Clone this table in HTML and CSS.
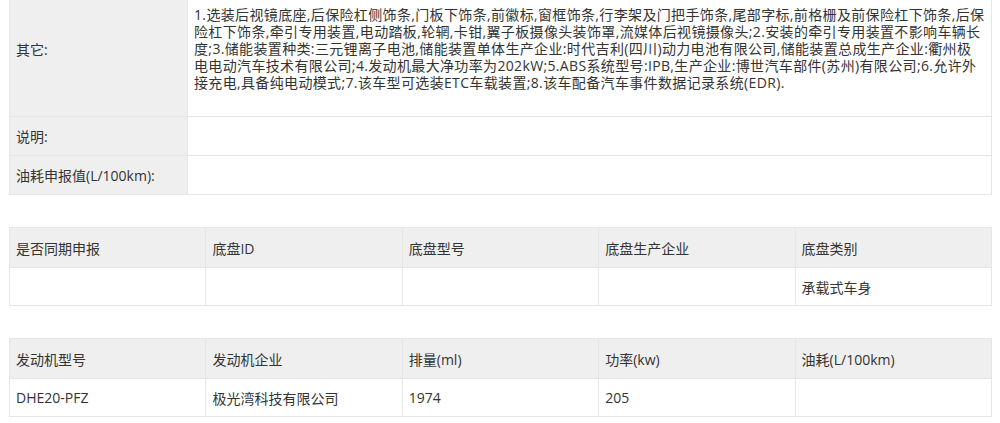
FILE: index.html
```html
<!DOCTYPE html>
<html lang="zh-CN">
<head>
<meta charset="utf-8">
<title>车型参数</title>
<link rel="stylesheet" href="styles.css">
</head>
<body>
<table class="info">
  <tr class="row-tall">
    <th class="label">其它:</th>
    <td class="value">1.选装后视镜底座,后保险杠侧饰条,门板下饰条,前徽标,窗框饰条,行李架及门把手饰条,尾部字标,前格栅及前保险杠下饰条,后保<br>险杠下饰条,牵引专用装置,电动踏板,轮辋,卡钳,翼子板摄像头装饰罩,流媒体后视镜摄像头;2.安装的牵引专用装置不影响车辆长<br>度;3.储能装置种类:三元锂离子电池,储能装置单体生产企业:时代吉利(四川)动力电池有限公司,储能装置总成生产企业:衢州极<br>电电动汽车技术有限公司;4.发动机最大净功率为202kW;5.ABS系统型号:IPB,生产企业:博世汽车部件(苏州)有限公司;6.允许外<br>接充电,具备纯电动模式;7.该车型可选装ETC车载装置;8.该车配备汽车事件数据记录系统(EDR).</td>
  </tr>
  <tr class="row">
    <th class="label">说明:</th>
    <td class="value"></td>
  </tr>
  <tr class="row">
    <th class="label">油耗申报值(L/100km):</th>
    <td class="value"></td>
  </tr>
</table>

<table class="grid">
  <tr class="head">
    <th>是否同期申报</th>
    <th>底盘ID</th>
    <th>底盘型号</th>
    <th>底盘生产企业</th>
    <th>底盘类别</th>
  </tr>
  <tr class="data">
    <td></td>
    <td></td>
    <td></td>
    <td></td>
    <td>承载式车身</td>
  </tr>
</table>

<table class="grid">
  <tr class="head">
    <th>发动机型号</th>
    <th>发动机企业</th>
    <th>排量(ml)</th>
    <th>功率(kw)</th>
    <th>油耗(L/100km)</th>
  </tr>
  <tr class="data">
    <td>DHE20-PFZ</td>
    <td>极光湾科技有限公司</td>
    <td>1974</td>
    <td>205</td>
    <td></td>
  </tr>
</table>
</body>
</html>
```

FILE: styles.css
```css
html, body {
  margin: 0;
  padding: 0;
  background: #ffffff;
}

body {
  font-family: "Open Sans", "Noto Sans CJK SC", sans-serif;
  font-size: 14px;
  color: #333333;
  padding: 0 8px 0 9px;
}

table {
  border-collapse: collapse;
  width: 983px;
  table-layout: fixed;
}

th, td {
  border: 1px solid #e6e6e6;
  font-weight: normal;
  text-align: left;
  padding: 0 6px;
  vertical-align: middle;
}

.info {
  margin-top: -20px;
}

.info .label {
  width: 171px;
  background: #efefef;
  padding-right: 0;
}

.info .value {
  line-height: 17px;
  letter-spacing: 0.35px;
  white-space: nowrap;
}

.info .row-tall th,
.info .row-tall td {
  height: 135px;
}

.info .row th,
.info .row td {
  height: 38px;
}

.grid {
  margin-top: 32px;
}

.grid .head th {
  background: #efefef;
  height: 39px;
}

.grid .data td {
  height: 37px;
}
```
